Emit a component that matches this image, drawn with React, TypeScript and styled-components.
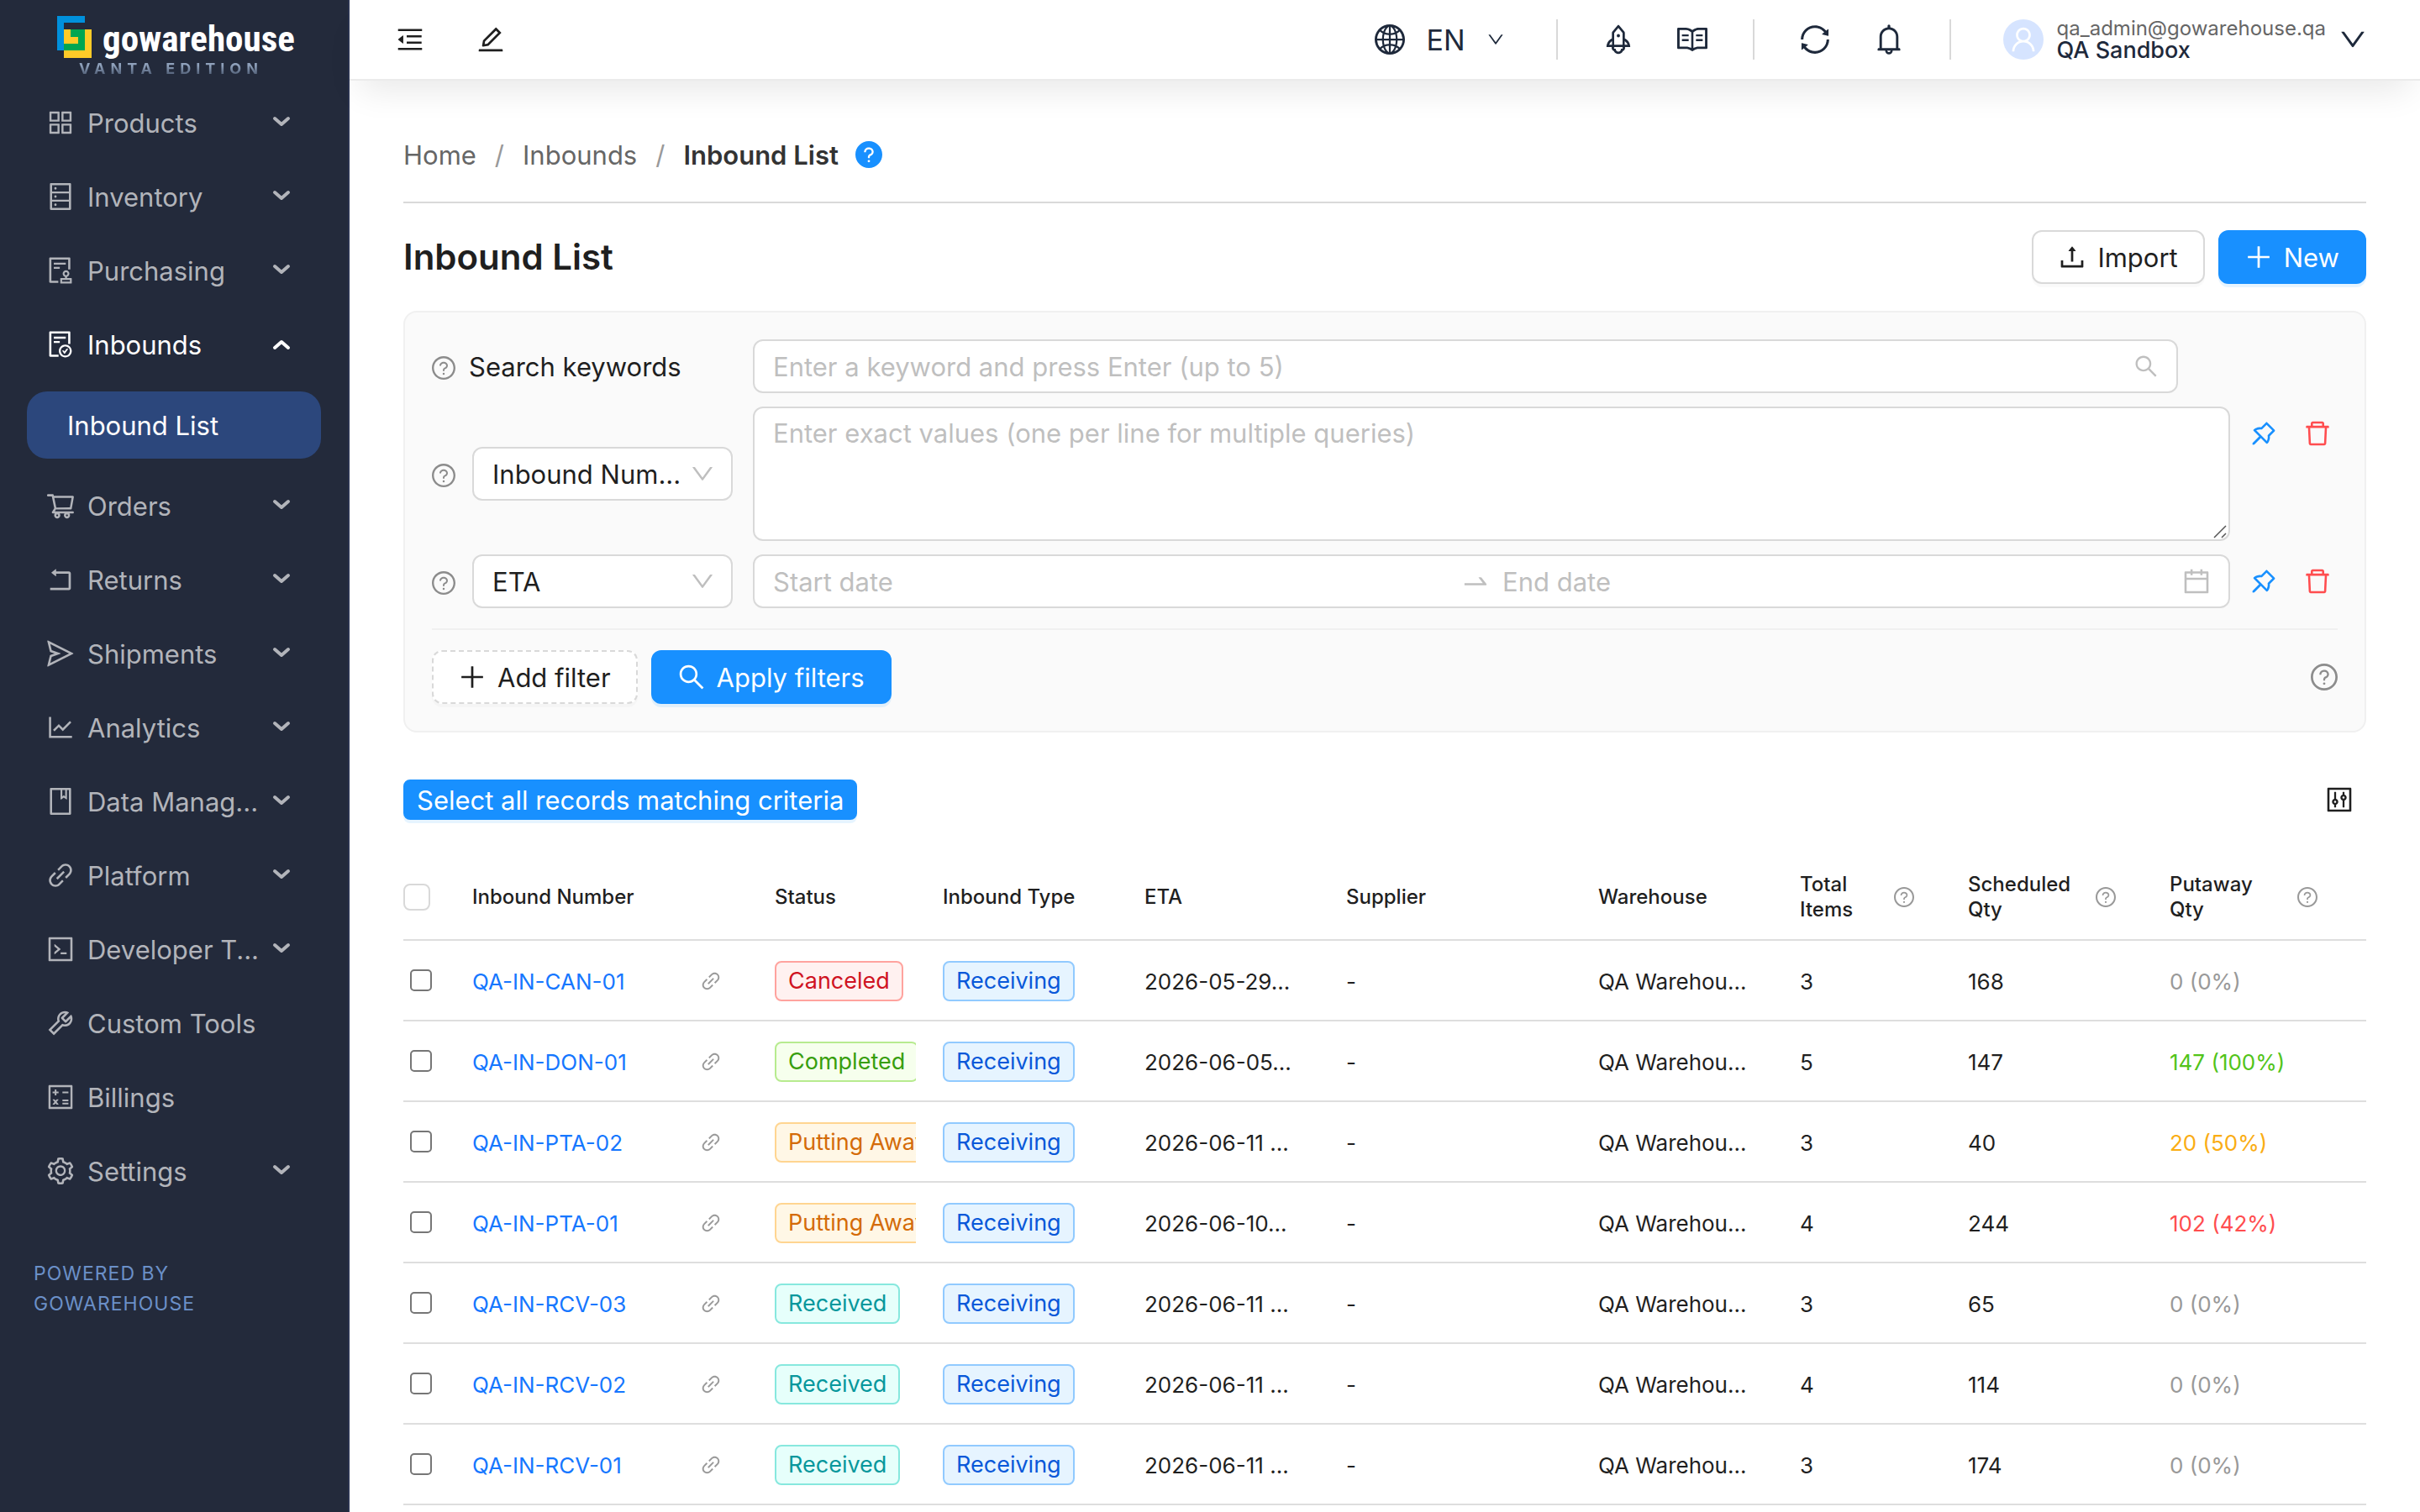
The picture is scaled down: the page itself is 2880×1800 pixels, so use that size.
import React, { useState } from 'react';
import styled, { createGlobalStyle, css } from 'styled-components';
import type { IconType } from 'react-icons';
import {
  AiOutlineAppstore, AiOutlineDatabase, AiOutlineAudit, AiOutlineFileDone, AiOutlineShoppingCart,
  AiOutlineRollback, AiOutlineSend, AiOutlineLineChart, AiOutlineBook, AiOutlineLink, AiOutlineCode,
  AiOutlineTool, AiOutlineCalculator, AiOutlineSetting, AiOutlineMenuFold, AiOutlineEdit,
  AiOutlineGlobal, AiOutlineDown, AiOutlineRocket, AiOutlineRead, AiOutlineSync, AiOutlineBell,
  AiOutlineUser, AiFillQuestionCircle, AiOutlineQuestionCircle, AiOutlineUpload, AiOutlinePlus,
  AiOutlineSearch, AiOutlinePushpin, AiOutlineDelete, AiOutlineCalendar, AiOutlineControl,
  AiOutlineSwapRight,
} from 'react-icons/ai';

const color = {
  navy: '#232a3b',
  navyActive: '#2c477c',
  navyEdge: '#2b3450',
  primary: '#1890ff',
  link: '#1677ff',
  text: '#1f1f1f',
  border: '#d9d9d9',
  soft: '#f0f0f0',
  hint: '#bfbfbf',
  muted: '#8c8c8c',
  danger: '#ff4d4f',
};

const GlobalStyle = createGlobalStyle`
  *, *::before, *::after { box-sizing: border-box; }
  body { margin: 0; background: #fff; }
  body, button, input, select, textarea {
    font-family: Inter, "Liberation Sans", sans-serif;
    font-size: 31px;
    color: ${color.text};
  }
  button { cursor: pointer; }
  a { text-decoration: none; }
  svg { flex: none; }
`;

/* The icon set is drawn on a 1024 grid with a 64 unit margin, which is cropped here. */
const Icon = ({ as: Glyph, size = 32 }: { as: IconType; size?: number }) => (
  <Glyph size={size} viewBox="64 64 896 896" aria-hidden="true" />
);

const Shell = styled.div`
  display: flex;
  min-height: 100vh;
`;

/* ---------- sidebar ---------- */

const Sidebar = styled.aside`
  flex: none;
  width: 416px;
  border-right: 2px solid ${color.navyEdge};
  background: ${color.navy};
`;

const Brand = styled.a`
  display: flex;
  flex-direction: column;
  gap: 3px;
  height: 106px;
  padding: 19px 0 0 68px;
  color: #fff;
`;

const BrandRow = styled.span`
  display: flex;
  align-items: center;
  gap: 12px;
  height: 50px;
`;

const Wordmark = styled.span`
  padding-top: 4px;
  font-family: "Liberation Sans Narrow", "Roboto Condensed", "Open Sans Condensed", "DejaVu Sans Condensed", sans-serif;
  font-size: 43px;
  line-height: 50px;
  font-weight: 700;
`;

const Edition = styled.span`
  padding-left: 26px;
  font-size: 18px;
  line-height: 20px;
  font-weight: 700;
  letter-spacing: 6px;
  white-space: nowrap;
  color: transparent;
  background: linear-gradient(#8fa1bb 30%, #505e76 85%);
  background-clip: text;
`;

const Menu = styled.ul`
  display: flex;
  flex-direction: column;
  gap: 8px;
  margin: 0;
  padding: 0 32px;
  list-style: none;
`;

const MenuButton = styled.button<{ $open?: boolean }>`
  display: flex;
  align-items: center;
  gap: 16px;
  width: 100%;
  height: 80px;
  padding: 0 36px 0 24px;
  border: 0;
  background: none;
  text-align: left;
  color: ${(p) => (p.$open ? '#fff' : '#b2b4ba')};
`;

const MenuText = styled.span`
  flex: 1;
  min-width: 0;
  white-space: nowrap;
`;

const SubMenu = styled.ul`
  margin: 16px 0 8px;
  padding: 0;
  list-style: none;
`;

const SubLink = styled.a`
  display: flex;
  align-items: center;
  height: 80px;
  padding-left: 48px;
  border-radius: 24px;
  background: ${color.navyActive};
  color: #fff;
`;

const Powered = styled.p`
  width: 240px;
  margin: 64px 0 0 40px;
  font-size: 23px;
  line-height: 36px;
  letter-spacing: 1px;
  color: #6b90c8;
`;

const Chevron = ({ up }: { up?: boolean }) => (
  <svg width="22" height="18" viewBox="0 0 22 18" fill="none" stroke="currentColor" strokeWidth="4" strokeLinecap="round" strokeLinejoin="round" aria-hidden="true">
    <path d={up ? 'M3 13l8-7 8 7' : 'M3 4l8 7 8-7'} />
  </svg>
);

const LogoMark = () => (
  <svg width="42" height="50" viewBox="0 0 42 50" aria-hidden="true">
    <path fill="#0090dc" d="M0 0h33v8H8v33H0z" />
    <path fill="#ffcb28" d="M8 16h33v34H8z" />
    <path fill="#00a651" d="M16 16h17v25H8v-8h17v-8h-9z" />
  </svg>
);

/* ---------- top bar ---------- */

const Main = styled.div`
  flex: 1;
  min-width: 0;
`;

const TopBar = styled.header`
  display: flex;
  justify-content: space-between;
  align-items: center;
  height: 96px;
  padding: 0 64px 0 56px;
  border-bottom: 2px solid #ebebeb;
  background: #fff;
  box-shadow: 0 24px 40px -12px rgba(0, 0, 0, 0.09);
`;

const Group = styled.div<{ $gap: number }>`
  display: flex;
  align-items: center;
  gap: ${(p) => p.$gap}px;
`;

const BareButton = styled.button<{ $tone?: string; $size?: number }>`
  display: flex;
  align-items: center;
  justify-content: center;
  width: ${(p) => (p.$size ? `${p.$size}px` : 'auto')};
  padding: 0;
  border: 0;
  background: none;
  color: ${(p) => p.$tone ?? '#1e293b'};
`;

const LangButton = styled(BareButton)`
  gap: 26px;
  margin-right: 8px;
  font-size: 34px;
`;

const Rule = styled.span`
  width: 2px;
  height: 48px;
  background: ${color.border};
`;

const UserButton = styled(BareButton)`
  gap: 16px;
  margin-left: 8px;
  text-align: left;
`;

const Avatar = styled.span`
  display: flex;
  align-items: center;
  justify-content: center;
  width: 48px;
  height: 48px;
  border-radius: 50%;
  background: #d6e4ff;
  color: #fff;
`;

const UserText = styled.span`
  display: flex;
  flex-direction: column;
  font-size: 27px;
  line-height: 26px;
  font-weight: 500;
`;

const Email = styled.span`
  font-size: 24px;
  font-weight: 400;
  color: #666;
`;

/* ---------- page head ---------- */

const Page = styled.main`
  padding: 56px 64px 8px;
`;

const Crumbs = styled.nav`
  display: flex;
  align-items: center;
  gap: 22px;
  height: 90px;
  padding-bottom: 24px;
  border-bottom: 2px solid ${color.border};
  color: #999;

  a { color: #666; }
  strong { font-weight: 600; color: #333; }
`;

const Current = styled.span`
  display: flex;
  align-items: center;
  gap: 20px;
  color: ${color.primary};
`;

const TitleRow = styled.div`
  display: flex;
  align-items: center;
  justify-content: space-between;
  margin: 32px 0;
`;

const Title = styled.h1`
  margin: 0;
  font-size: 42px;
  line-height: 64px;
  font-weight: 600;
`;

const Button = styled.button<{ $kind?: 'primary' | 'dashed' | 'default' }>`
  display: flex;
  align-items: center;
  gap: 14px;
  height: 64px;
  padding: 0 30px;
  border: 2px solid ${color.border};
  border-radius: 12px;
  background: #fff;
  box-shadow: 0 4px 0 rgba(0, 0, 0, 0.02);
  white-space: nowrap;
  ${(p) => p.$kind === 'dashed' && css`border-style: dashed;`}
  ${(p) => p.$kind === 'primary' && css`
    border-color: ${color.primary};
    background: ${color.primary};
    color: #fff;
    box-shadow: 0 4px 0 rgba(5, 145, 255, 0.1);
  `}
`;

const SmallButton = styled(Button)`
  height: 48px;
  padding: 0 14px;
  border-radius: 8px;
`;

/* ---------- filters ---------- */

const Panel = styled.form`
  display: flex;
  flex-direction: column;
  gap: 16px;
  padding: 32px;
  border: 2px solid ${color.soft};
  border-radius: 16px;
  background: #fafafa;
`;

const FilterRow = styled.div`
  display: grid;
  grid-template-columns: 28px 322px minmax(0, 1fr) auto;
  align-items: center;
  column-gap: 16px;
`;

const Help = styled.span`
  display: flex;
  color: ${color.muted};
`;

const RowHelp = styled(Help)`
  padding-top: 4px;
`;

const field = css`
  border: 2px solid ${color.border};
  border-radius: 12px;
  background: #fff;
`;

const FieldBox = styled.div`
  ${field}
  display: flex;
  align-items: center;
  height: 64px;
  padding: 0 22px;
  color: ${color.hint};
`;

const BareInput = styled.input`
  flex: 1;
  min-width: 0;
  padding: 0;
  border: 0;
  outline: 0;
  background: none;
  &::placeholder { color: ${color.hint}; opacity: 1; }
`;

const AreaWrap = styled.div`
  position: relative;
`;

const ExactValues = styled.textarea`
  ${field}
  display: block;
  width: 100%;
  height: 160px;
  padding: 8px 22px;
  line-height: 44px;
  resize: vertical;
  &::placeholder { color: ${color.hint}; opacity: 1; }
  &::-webkit-resizer { background: none; }
`;

const Grip = styled.svg`
  position: absolute;
  right: 2px;
  bottom: 3px;
  pointer-events: none;
`;

const Arrow = styled.span`
  display: flex;
  padding: 0 16px;
`;

const Suffix = styled.span`
  display: flex;
  margin-left: 6px;
`;

const SelectBox = styled.div`
  ${field}
  display: grid;
  grid-template-columns: minmax(0, 1fr) 28px;
  align-items: center;
  height: 64px;
  margin: 0 8px 0 4px;
  padding-right: 20px;
  color: ${color.hint};
`;

const Select = styled.select`
  width: 100%;
  height: 60px;
  padding: 0 0 0 22px;
  border: 0;
  outline: 0;
  background: none;
  appearance: none;
  text-overflow: ellipsis;
`;

const Actions = styled.div<{ $empty?: boolean }>`
  display: flex;
  gap: 16px;
  align-self: start;
  align-items: center;
  width: ${(p) => (p.$empty ? 174 : 112)}px;
  height: 64px;
`;

const Footer = styled.div`
  display: flex;
  align-items: center;
  justify-content: space-between;
  margin-top: 8px;
  padding-top: 24px;
  border-top: 2px solid ${color.soft};
`;

/* ---------- table ---------- */

const Toolbar = styled.div`
  display: flex;
  align-items: center;
  justify-content: space-between;
  margin: 56px 0 42px;
  padding-right: 16px;
`;

const Table = styled.table`
  width: 100%;
  table-layout: fixed;
  border-collapse: separate;
  border-spacing: 0;
  font-size: 26px;
`;

const Th = styled.th`
  height: 102px;
  padding: 0 16px;
  border-bottom: 2px solid #dedede;
  font-size: 24px;
  line-height: 30px;
  font-weight: 500;
  text-align: left;
  white-space: pre-line;
`;

const Td = styled.td<{ $tone?: string }>`
  height: 96px;
  padding: 0;
  border-bottom: 2px solid #dedede;
  color: ${(p) => p.$tone ?? color.text};
`;

const Cell = styled.div`
  display: flex;
  align-items: center;
  justify-content: space-between;
  margin: 0 16px;
  padding-top: 2px;
  overflow: hidden;
  white-space: nowrap;
`;

const NumberCell = styled(Cell)`
  padding-right: 32px;
`;

const RecordLink = styled.a`
  color: ${color.link};
`;

const HeadHelp = styled.span<{ $width: number }>`
  display: grid;
  grid-template-columns: ${(p) => p.$width}px 24px;
  align-items: center;
  svg { color: #999; }
`;

const AllCheck = styled.input`
  appearance: none;
  display: block;
  width: 32px;
  height: 32px;
  margin: 0 0 0 -16px;
  border: 2px solid ${color.border};
  border-radius: 8px;
  background: #fff;
`;

const RowCheck = styled.input`
  appearance: none;
  display: block;
  width: 26px;
  height: 26px;
  margin: 0 0 0 8px;
  border: 2px solid #767676;
  border-radius: 5px;
  background: #fff;
  &:checked { background: ${color.primary}; }
`;

const tones = {
  red: ['#cf1322', '#fff1f0', '#ffa39e'],
  green: ['#389e0d', '#f6ffed', '#b7eb8f'],
  orange: ['#d46b08', '#fff7e6', '#ffd591'],
  cyan: ['#08979c', '#e6fffb', '#87e8de'],
  blue: ['#0958d9', '#e6f4ff', '#91caff'],
};

const Tag = styled.span<{ $tone: keyof typeof tones }>`
  flex: none;
  height: 48px;
  padding: 0 14px;
  border: 2px solid ${(p) => tones[p.$tone][2]};
  border-radius: 8px;
  background: ${(p) => tones[p.$tone][1]};
  color: ${(p) => tones[p.$tone][0]};
  font-size: 27px;
  line-height: 44px;
`;

/* ---------- data ---------- */

const menu: { label: string; icon: IconType; leaf?: boolean; open?: boolean }[] = [
  { label: 'Products', icon: AiOutlineAppstore },
  { label: 'Inventory', icon: AiOutlineDatabase },
  { label: 'Purchasing', icon: AiOutlineAudit },
  { label: 'Inbounds', icon: AiOutlineFileDone, open: true },
  { label: 'Orders', icon: AiOutlineShoppingCart },
  { label: 'Returns', icon: AiOutlineRollback },
  { label: 'Shipments', icon: AiOutlineSend },
  { label: 'Analytics', icon: AiOutlineLineChart },
  { label: 'Data Manag...', icon: AiOutlineBook },
  { label: 'Platform', icon: AiOutlineLink },
  { label: 'Developer T...', icon: AiOutlineCode },
  { label: 'Custom Tools', icon: AiOutlineTool, leaf: true },
  { label: 'Billings', icon: AiOutlineCalculator, leaf: true },
  { label: 'Settings', icon: AiOutlineSetting },
];

const columns: { title: string; width?: number; help?: number }[] = [
  { title: 'Inbound Number', width: 360 },
  { title: 'Status', width: 200 },
  { title: 'Inbound Type', width: 240 },
  { title: 'ETA', width: 240 },
  { title: 'Supplier', width: 300 },
  { title: 'Warehouse', width: 240 },
  { title: 'Total\nItems', width: 200, help: 112 },
  { title: 'Scheduled\nQty', width: 240, help: 152 },
  { title: 'Putaway\nQty', help: 152 },
];

type Row = [string, string, keyof typeof tones, string, number, number, string, string];

const rows: Row[] = [
  ['QA-IN-CAN-01', 'Canceled', 'red', '2026-05-29...', 3, 168, '0 (0%)', '#999'],
  ['QA-IN-DON-01', 'Completed', 'green', '2026-06-05...', 5, 147, '147 (100%)', '#52c41a'],
  ['QA-IN-PTA-02', 'Putting Away', 'orange', '2026-06-11 ...', 3, 40, '20 (50%)', '#faad14'],
  ['QA-IN-PTA-01', 'Putting Away', 'orange', '2026-06-10...', 4, 244, '102 (42%)', '#ff4d4f'],
  ['QA-IN-RCV-03', 'Received', 'cyan', '2026-06-11 ...', 3, 65, '0 (0%)', '#999'],
  ['QA-IN-RCV-02', 'Received', 'cyan', '2026-06-11 ...', 4, 114, '0 (0%)', '#999'],
  ['QA-IN-RCV-01', 'Received', 'cyan', '2026-06-11 ...', 3, 174, '0 (0%)', '#999'],
];

const RowActions = () => (
  <Actions>
    <BareButton type="button" $size={48} $tone={color.primary} aria-label="Pin filter"><Icon as={AiOutlinePushpin} /></BareButton>
    <BareButton type="button" $size={48} $tone={color.danger} aria-label="Delete filter"><Icon as={AiOutlineDelete} /></BareButton>
  </Actions>
);

const FieldSelect = ({ label, options }: { label: string; options: string[] }) => (
  <SelectBox>
    <Select aria-label={label}>
      {options.map((o) => <option key={o}>{o}</option>)}
    </Select>
    <Icon as={AiOutlineDown} size={28} />
  </SelectBox>
);

export default function App() {
  const [selected, setSelected] = useState<string[]>([]);
  const toggle = (id: string) =>
    setSelected((s) => (s.includes(id) ? s.filter((x) => x !== id) : [...s, id]));

  return (
    <>
      <GlobalStyle />
      <Shell>
        <Sidebar>
          <Brand href="#home">
            <BrandRow>
              <LogoMark />
              <Wordmark>gowarehouse</Wordmark>
            </BrandRow>
            <Edition>VANTA EDITION</Edition>
          </Brand>
          <Menu>
            {menu.map((m) => (
              <li key={m.label}>
                <MenuButton type="button" $open={m.open}>
                  <Icon as={m.icon} />
                  <MenuText>{m.label}</MenuText>
                  {!m.leaf && <Chevron up={m.open} />}
                </MenuButton>
                {m.open && (
                  <SubMenu>
                    <li><SubLink href="#inbound-list">Inbound List</SubLink></li>
                  </SubMenu>
                )}
              </li>
            ))}
          </Menu>
          <Powered>POWERED BY GOWAREHOUSE</Powered>
        </Sidebar>

        <Main>
          <TopBar>
            <Group $gap={64}>
              <BareButton type="button" aria-label="Collapse menu" $tone={color.text}><Icon as={AiOutlineMenuFold} /></BareButton>
              <BareButton type="button" aria-label="Edit" $tone={color.text}><Icon as={AiOutlineEdit} /></BareButton>
            </Group>
            <Group $gap={54}>
              <LangButton type="button">
                <Icon as={AiOutlineGlobal} size={36} />
                EN
                <Icon as={AiOutlineDown} size={20} />
              </LangButton>
              <Rule />
              <Group $gap={52}>
                <BareButton type="button" aria-label="What is new"><Icon as={AiOutlineRocket} size={36} /></BareButton>
                <BareButton type="button" aria-label="Guide"><Icon as={AiOutlineRead} size={36} /></BareButton>
              </Group>
              <Rule />
              <Group $gap={52}>
                <BareButton type="button" aria-label="Refresh"><Icon as={AiOutlineSync} size={36} /></BareButton>
                <BareButton type="button" aria-label="Notifications"><Icon as={AiOutlineBell} size={36} /></BareButton>
              </Group>
              <Rule />
              <UserButton type="button">
                <Avatar><Icon as={AiOutlineUser} size={32} /></Avatar>
                <UserText>
                  <Email>qa_admin@gowarehouse.qa</Email>
                  QA Sandbox
                </UserText>
                <Icon as={AiOutlineDown} size={32} />
              </UserButton>
            </Group>
          </TopBar>

          <Page>
            <Crumbs aria-label="Breadcrumb">
              <a href="#home">Home</a>
              <span>/</span>
              <a href="#inbounds">Inbounds</a>
              <span>/</span>
              <Current>
                <strong>Inbound List</strong>
                <Icon as={AiFillQuestionCircle} />
              </Current>
            </Crumbs>

            <TitleRow>
              <Title>Inbound List</Title>
              <Group $gap={16}>
                <Button type="button"><Icon as={AiOutlineUpload} />Import</Button>
                <Button type="button" $kind="primary"><Icon as={AiOutlinePlus} />New</Button>
              </Group>
            </TitleRow>

            <Panel onSubmit={(e) => e.preventDefault()}>
              <FilterRow>
                <RowHelp><Icon as={AiOutlineQuestionCircle} size={28} /></RowHelp>
                <label htmlFor="keywords">Search keywords</label>
                <FieldBox>
                  <BareInput id="keywords" placeholder="Enter a keyword and press Enter (up to 5)" />
                  <Icon as={AiOutlineSearch} size={28} />
                </FieldBox>
                <Actions $empty />
              </FilterRow>
              <FilterRow>
                <RowHelp><Icon as={AiOutlineQuestionCircle} size={28} /></RowHelp>
                <FieldSelect label="Exact field" options={['Inbound Num...', 'Supplier']} />
                <AreaWrap>
                  <ExactValues aria-label="Exact values" placeholder="Enter exact values (one per line for multiple queries)" />
                  <Grip width="18" height="18" viewBox="0 0 18 18" stroke="#555" strokeWidth="1.5" aria-hidden="true">
                    <path d="M1 17L15 3M10 17l5-5" />
                  </Grip>
                </AreaWrap>
                <RowActions />
              </FilterRow>
              <FilterRow>
                <RowHelp><Icon as={AiOutlineQuestionCircle} size={28} /></RowHelp>
                <FieldSelect label="Date field" options={['ETA', 'Created']} />
                <FieldBox>
                  <BareInput aria-label="Start date" placeholder="Start date" />
                  <Arrow><Icon as={AiOutlineSwapRight} /></Arrow>
                  <BareInput aria-label="End date" placeholder="End date" />
                  <Suffix><Icon as={AiOutlineCalendar} /></Suffix>
                </FieldBox>
                <RowActions />
              </FilterRow>
              <Footer>
                <Group $gap={16}>
                  <Button type="button" $kind="dashed"><Icon as={AiOutlinePlus} />Add filter</Button>
                  <Button type="submit" $kind="primary"><Icon as={AiOutlineSearch} />Apply filters</Button>
                </Group>
                <Help><Icon as={AiOutlineQuestionCircle} /></Help>
              </Footer>
            </Panel>

            <Toolbar>
              <SmallButton type="button" $kind="primary">Select all records matching criteria</SmallButton>
              <BareButton type="button" aria-label="Column settings" $tone={color.text}><Icon as={AiOutlineControl} /></BareButton>
            </Toolbar>

            <Table>
              <colgroup>
                <col width={66} />
                {columns.map((c) => <col key={c.title} width={c.width} />)}
              </colgroup>
              <thead>
                <tr>
                  <Th scope="col">
                    <AllCheck
                      type="checkbox"
                      aria-label="Select all rows"
                      checked={selected.length === rows.length}
                      onChange={() => setSelected(selected.length === rows.length ? [] : rows.map((r) => r[0]))}
                    />
                  </Th>
                  {columns.map((c) => (
                    <Th key={c.title} scope="col">
                      {c.help ? (
                        <HeadHelp $width={c.help}>
                          <span>{c.title}</span>
                          <Icon as={AiOutlineQuestionCircle} size={24} />
                        </HeadHelp>
                      ) : c.title}
                    </Th>
                  ))}
                </tr>
              </thead>
              <tbody>
                {rows.map(([id, status, tone, eta, items, qty, putaway, putTone]) => (
                  <tr key={id}>
                    <Td>
                      <RowCheck type="checkbox" aria-label={`Select ${id}`} checked={selected.includes(id)} onChange={() => toggle(id)} />
                    </Td>
                    <Td>
                      <NumberCell>
                        <RecordLink href={`#${id}`}>{id}</RecordLink>
                        <BareButton type="button" aria-label={`Copy link to ${id}`} $tone="#999"><Icon as={AiOutlineLink} size={24} /></BareButton>
                      </NumberCell>
                    </Td>
                    <Td><Cell><Tag $tone={tone}>{status}</Tag></Cell></Td>
                    <Td><Cell><Tag $tone="blue">Receiving</Tag></Cell></Td>
                    <Td><Cell>{eta}</Cell></Td>
                    <Td><Cell>-</Cell></Td>
                    <Td><Cell>QA Warehou...</Cell></Td>
                    <Td><Cell>{items}</Cell></Td>
                    <Td><Cell>{qty}</Cell></Td>
                    <Td $tone={putTone}><Cell>{putaway}</Cell></Td>
                  </tr>
                ))}
              </tbody>
            </Table>
          </Page>
        </Main>
      </Shell>
    </>
  );
}
